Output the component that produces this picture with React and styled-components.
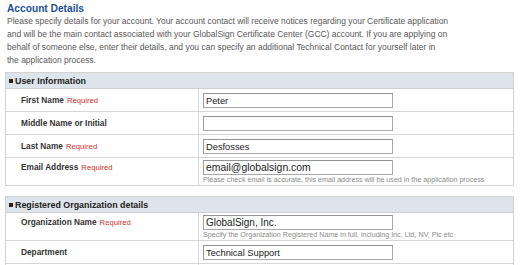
import React from "react";
import styled, { createGlobalStyle } from "styled-components";

const GlobalStyle = createGlobalStyle`
  html, body {
    margin: 0;
    padding: 0;
    background: #ffffff;
  }
  body {
    font-family: "Liberation Sans", Arial, sans-serif;
  }
`;

const Page = styled.div`
  width: 509px;
  padding: 3px 0 0 5px;
`;

const Title = styled.h2`
  margin: 0 0 0 2px;
  font-size: 10.2px;
  line-height: 12px;
  font-weight: bold;
  color: #1d4f9c;
`;

const Intro = styled.p`
  margin: 0 0 5px 2px;
  font-size: 8.47px;
  line-height: 13px;
  color: #585858;
  white-space: nowrap;
`;

const Section = styled.section`
  border: 1px solid #d2d2d2;
  margin-bottom: ${p => p.gap || 0}px;
`;

const SectionHeader = styled.div`
  display: flex;
  align-items: center;
  height: 15px;
  padding-left: 3px;
  background: #dee4eb;
  border-bottom: 1px solid #cfcfcf;
  font-size: 8.9px;
  font-weight: bold;
  color: #222;
`;

const Bullet = styled.span`
  width: 4px;
  height: 4px;
  margin-right: 2px;
  background: #222;
`;

const Row = styled.div`
  display: grid;
  grid-template-columns: 193px 1fr;
  border-top: ${p => (p.first ? "none" : "1px solid #d6d6d6")};
`;

const LabelCell = styled.div`
  box-sizing: border-box;
  border-right: 1px solid #d6d6d6;
  padding: ${p => (p.hint ? "2px" : "4px")} 0 0 15px;
  line-height: 15px;
  font-size: 8.3px;
  font-weight: bold;
  color: #333;
`;

const Required = styled.span`
  margin-left: 3px;
  font-size: 7.7px;
  font-weight: normal;
  color: #d0302b;
`;

const ValueCell = styled.div`
  display: flex;
  flex-direction: column;
  padding: ${p => (p.hint ? "2px 4px 0" : "4px 4px 3px")};
`;

const TextInput = styled.input`
  box-sizing: border-box;
  width: 190px;
  height: 15px;
  margin: 0;
  padding: 0 2px;
  border: 1px solid #a9a9a9;
  border-top-color: #939393;
  border-left-color: #9c9c9c;
  background: #fff;
  font-family: "Liberation Sans", Arial, sans-serif;
  font-size: ${p => p.size || 9.3}px;
  color: #222;
  outline: none;
`;

const Hint = styled.div`
  margin-top: 1px;
  font-size: 7.15px;
  line-height: 9px;
  color: #8a8a8a;
  white-space: nowrap;
`;

const Field = ({ label, required, value, size, hint, first }) => (
  <Row first={first}>
    <LabelCell hint={hint}>
      {label}
      {required && <Required>Required</Required>}
    </LabelCell>
    <ValueCell hint={hint}>
      <TextInput readOnly value={value} size={size} />
      {hint && <Hint>{hint}</Hint>}
    </ValueCell>
  </Row>
);

export default function App() {
  return (
    <Page>
      <GlobalStyle />
      <Title>Account Details</Title>
      <Intro>
        Please specify details for your account. Your account contact will receive notices regarding your Certificate application
        <br />
        and will be the main contact associated with your GlobalSign Certificate Center (GCC) account. If you are applying on
        <br />
        behalf of someone else, enter their details, and you can specify an additional Technical Contact for yourself later in
        <br />
        the application process.
      </Intro>

      <Section gap={10}>
        <SectionHeader>
          <Bullet />
          User Information
        </SectionHeader>
        <Field first label="First Name" required value="Peter" />
        <Field label="Middle Name or Initial" value="" />
        <Field label="Last Name" required value="Desfosses" />
        <Field
          label="Email Address"
          required
          value="email@globalsign.com"
          size={10.4}
          hint="Please check email is accurate, this email address will be used in the application process"
        />
      </Section>

      <Section>
        <SectionHeader>
          <Bullet />
          Registered Organization details
        </SectionHeader>
        <Field
          first
          label="Organization Name"
          required
          value="GlobalSign, Inc."
          size={10}
          hint="Specify the Organization Registered Name in full, including Inc, Ltd, NV, Plc etc"
        />
        <Field label="Department" value="Technical Support" />
        <Field label="" value="" />
      </Section>
    </Page>
  );
}
